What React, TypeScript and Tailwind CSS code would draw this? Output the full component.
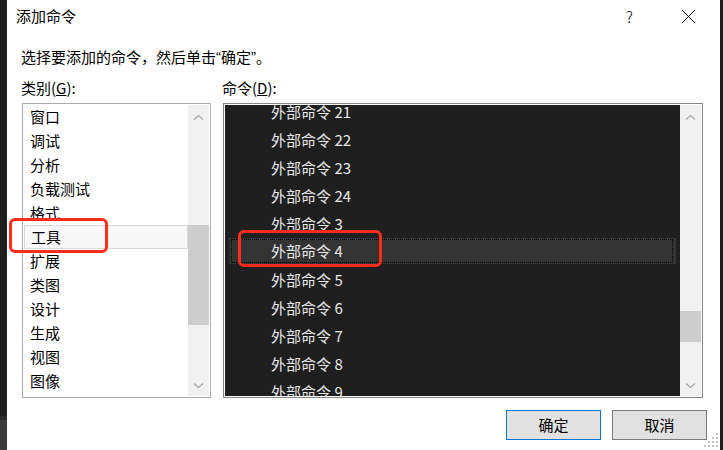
import React from "react";

const categories = ["窗口", "调试", "分析", "负载测试", "格式", "工具", "扩展", "类图", "设计", "生成", "视图", "图像"];
const commands = ["21", "22", "23", "24", "3", "4", "5", "6", "7", "8", "9"];

function Chevron({ down }: { down?: boolean }) {
  return (
    <svg width="11" height="7" viewBox="0 0 11 7">
      <path
        d={down ? "M1 1.5 L5.5 5.5 L10 1.5" : "M1 5.5 L5.5 1.5 L10 5.5"}
        fill="none"
        stroke="#a6a6a6"
        strokeWidth="1.3"
      />
    </svg>
  );
}

function ScrollBar({ thumbTop, thumbHeight }: { thumbTop: string; thumbHeight: string }) {
  return (
    <div className="w-[21px] h-full bg-[#f0f0f0] flex flex-col shrink-0">
      <div className="h-[24px] flex items-center justify-center">
        <Chevron />
      </div>
      <div className="flex-1 flex flex-col">
        <div className={thumbTop} />
        <div className={`${thumbHeight} bg-[#cdcdcd]`} />
      </div>
      <div className="h-[22px] flex items-center justify-center">
        <Chevron down />
      </div>
    </div>
  );
}

export default function App() {
  return (
    <div
      className="relative w-[723px] h-[450px] flex overflow-hidden text-black"
      style={{ fontFamily: '"Noto Sans CJK SC", "Noto Sans", sans-serif' }}
    >
      {/* left edge of window behind */}
      <div className="w-[7px] h-full flex flex-col">
        <div className="h-[416px] bg-[#1f1f1f]" />
        <div className="h-[4px] bg-[#2a2a2a]" />
        <div className="flex-1 bg-[#3b3b3b]" />
      </div>

      {/* dialog */}
      <div className="w-[713px] h-full bg-white flex flex-col">
        <div className="h-[32px] flex items-center pl-[9px] pr-[24px]">
          <span className="text-[15px] leading-[18px]">添加命令</span>
          <span className="ml-auto text-[16px] leading-[18px] font-light mr-[48px]">?</span>
          <svg width="15" height="15" viewBox="0 0 15 15">
            <path d="M1 1 L14 14 M14 1 L1 14" stroke="#000" strokeWidth="1" />
          </svg>
        </div>

        <div className="mt-[17px] h-[16px] flex items-center pl-[14px] text-[15px] leading-[16px] whitespace-nowrap">
          <span>选择要添加的命令，然后单击</span>
          <span className="font-['Liberation_Sans']">“</span>
          <span>确定</span>
          <span className="font-['Liberation_Sans']">”</span>
          <span>。</span>
        </div>

        <div className="mt-[15px] h-[16px] flex pl-[14px] text-[15px] leading-[16px]">
          <div className="w-[201px]">
            类别(<span className="underline">G</span>):
          </div>
          <div>
            命令(<span className="underline">D</span>):
          </div>
        </div>

        <div className="mt-[7px] flex pl-[15px] gap-[12px]">
          {/* category list */}
          <div className="w-[189px] h-[295px] border border-[#adadad] p-[1px] flex bg-white">
            <div className="flex-1 flex flex-col overflow-hidden">
              {categories.map((c) => (
                <div
                  key={c}
                  className={`h-[24px] shrink-0 flex items-center pl-[6px] text-[15px] leading-[18px] ${
                    c === "工具" ? "bg-[#f7f7f7] border border-[#dadada] pl-[5px]" : ""
                  }`}
                >
                  {c}
                </div>
              ))}
            </div>
            <ScrollBar thumbTop="h-[96px]" thumbHeight="h-[100px]" />
          </div>

          {/* command list */}
          <div className="w-[480px] h-[295px] border border-[#858585] p-[1px] flex bg-white">
            <div className="flex-1 bg-[#1f1f1f] overflow-hidden">
              <div className="-mt-[7px] flex flex-col">
                {commands.map((n) => (
                  <div key={n} className="h-[28px] shrink-0 flex items-start">
                    {n === "4" ? (
                      <div className="mx-[4px] h-[26px] flex-1 bg-[#333333] p-[1px] pl-[2px] pr-[3px]">
                        <div className="h-full border border-dotted border-black flex items-center pl-[39px] text-[15px] leading-[18px] text-[#e8e8e8]">
                          外部命令 {n}
                        </div>
                      </div>
                    ) : (
                      <div className="h-[28px] flex items-center pl-[46px] text-[15px] leading-[18px] text-[#e8e8e8]">
                        外部命令 {n}
                      </div>
                    )}
                  </div>
                ))}
              </div>
            </div>
            <ScrollBar thumbTop="h-[182px]" thumbHeight="h-[31px]" />
          </div>
        </div>

        <div className="mt-[12px] flex justify-end gap-[11px] pr-[13px]">
          <button className="w-[95px] h-[30px] bg-[#e1e1e1] border border-[#0078d7] text-[15px] leading-[18px]">
            确定
          </button>
          <button className="w-[95px] h-[30px] bg-[#e1e1e1] border border-[#7a7a7a] text-[15px] leading-[18px]">
            取消
          </button>
        </div>
      </div>

      {/* right edge of window behind */}
      <div className="w-[3px] h-full bg-[#1f1f1f]" />

      {/* resize grip */}
      <svg className="absolute left-[704px] top-[433px]" width="15" height="15" viewBox="0 0 15 15">
        {[
          [12, 0], [12, 4], [8, 4], [12, 8], [8, 8], [4, 8], [12, 12], [8, 12], [4, 12], [0, 12],
        ].map(([x, y], i) => (
          <rect key={i} x={x} y={y} width="2" height="2" fill="#c2c2c2" />
        ))}
      </svg>

      {/* red annotation boxes */}
      <div className="absolute left-[9px] top-[218px] w-[99px] h-[35px] border-[3px] border-[#ff2b1c] rounded-[6px]" />
      <div className="absolute left-[238px] top-[230px] w-[144px] h-[37px] border-[3px] border-[#ff2b1c] rounded-[6px]" />
    </div>
  );
}
